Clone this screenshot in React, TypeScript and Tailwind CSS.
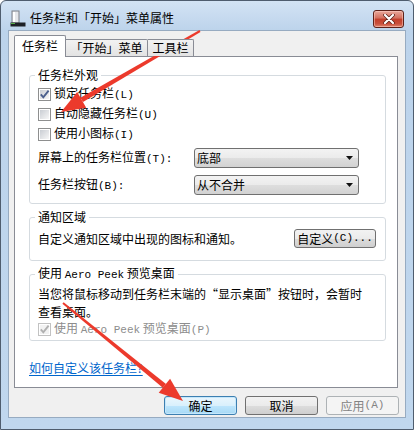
import React from "react";

const ui = "font-['Noto_Sans_CJK_SC','Noto_Sans_CJK_JP',sans-serif]";

function Lat({ children }: { children: React.ReactNode }) {
  return <span className="font-['Liberation_Mono',monospace] text-[11px]">{children}</span>;
}

function Check({ checked = false, disabled = false }: { checked?: boolean; disabled?: boolean }) {
  return (
    <span
      className={`relative w-[13px] h-[13px] shrink-0 border bg-white ${
        disabled ? "border-[#c2c2c2]" : "border-[#8e8f8f]"
      }`}
    >
      <span
        className={`absolute inset-px ${
          disabled ? "bg-[#f2f2f2]" : "bg-[linear-gradient(135deg,#c9cdd3,#f7f7f7)]"
        }`}
      />
      {checked && (
        <svg className="absolute inset-0" width="11" height="11" viewBox="0 0 11 11">
          <path
            d="M1.8 5.4 L4.3 8.3 L9.6 1.6"
            fill="none"
            stroke={disabled ? "#b0b0b0" : "#4b5f8d"}
            strokeWidth="1.9"
          />
        </svg>
      )}
    </span>
  );
}

function CheckRow({
  label,
  checked,
  disabled,
  h = "h-[20px]",
}: {
  label: React.ReactNode;
  checked?: boolean;
  disabled?: boolean;
  h?: string;
}) {
  return (
    <div className={`${h} flex items-center gap-[3px] ${disabled ? "text-[#8d8d8d]" : ""}`}>
      <Check checked={checked} disabled={disabled} />
      <span>{label}</span>
    </div>
  );
}

function Combo({ value }: { value: string }) {
  return (
    <div className="w-[165px] h-[20px] rounded-[3px] border border-[#707070] bg-[linear-gradient(#f3f3f3,#ebebeb_50%,#dedede_50%,#d2d2d2)] flex items-center pl-[2px] pr-[5px]">
      <span className="flex-1">{value}</span>
      <svg width="7" height="4" viewBox="0 0 7 4">
        <path d="M0 0 H7 L3.5 4 Z" fill="#111" />
      </svg>
    </div>
  );
}

function Group({
  title,
  className,
  children,
}: {
  title: React.ReactNode;
  className?: string;
  children: React.ReactNode;
}) {
  return (
    <fieldset className={`border border-[#d5dbe0] rounded-[3px] pl-[8px] ${className ?? ""}`}>
      <legend className="-ml-[3px] px-[3px] leading-[14px]">{title}</legend>
      {children}
    </fieldset>
  );
}

function Btn({
  children,
  primary,
  disabled,
}: {
  children: React.ReactNode;
  primary?: boolean;
  disabled?: boolean;
}) {
  let cls =
    "border-[#707070] bg-[linear-gradient(#f2f2f2,#ebebeb_50%,#dddddd_50%,#cfcfcf)] text-black";
  if (primary)
    cls =
      "border-[#3c7fb1] bg-[linear-gradient(#eaf6fd,#d9f0fc_50%,#bee6fd_50%,#a7d9f5)] text-black shadow-[inset_0_0_0_1px_#c5e7fb]";
  if (disabled) cls = "border-[#adb2b5] bg-[#f4f4f4] text-[#838383]";
  return (
    <button
      className={`w-[73px] h-[19px] rounded-[3px] border flex items-center justify-center leading-none ${cls}`}
    >
      {children}
    </button>
  );
}

export default function App() {
  return (
    <div
      lang="zh-CN"
      className={`relative w-[414px] h-[430px] overflow-hidden rounded-t-[6px] border border-[#4f5d6e] bg-[linear-gradient(#d3e3f4,#bcd3eb_30px,#c0d7ee)] text-[12px] text-black ${ui}`}
    >
      {/* title bar */}
      <div className="h-[29px] flex items-start pl-[9px] pr-[9px]">
        <svg className="mt-[9px]" width="16" height="17" viewBox="0 0 16 17">
          <rect x="2" y="1" width="7" height="12" fill="#e4e6ea" stroke="#7c8088" strokeWidth="1" />
          <rect x="3" y="2" width="2" height="10" fill="#ffffff" />
          <rect x="0.5" y="12.5" width="15" height="4" fill="#1d2026" />
          <rect x="1" y="13" width="4" height="1" fill="#5ab04a" />
        </svg>
        <span className="mt-[9px] ml-[4px] leading-[16px]">任务栏和「开始」菜单属性</span>
        <div className="flex-1" />
        <button className="mt-[9px] w-[31px] h-[18px] rounded-[3px] border border-[#5d2119] bg-[linear-gradient(#e9a99c,#d36e5d_45%,#c23e2a_50%,#c9503c_80%,#e0866f)] flex items-center justify-center shadow-[inset_0_0_0_1px_rgba(255,210,200,0.5)]">
          <svg width="12" height="10" viewBox="0 0 12 10">
            <path d="M2 1 L10 9 M10 1 L2 9" stroke="#5a2018" strokeWidth="3.6" strokeLinecap="round" />
            <path d="M2 1 L10 9 M10 1 L2 9" stroke="#ffffff" strokeWidth="2.2" strokeLinecap="round" />
          </svg>
        </button>
      </div>

      {/* client area */}
      <div className="ml-[7px] w-[398px] h-[388px] border border-[#97abc1] bg-[#f0f0f0] flex flex-col">
        <div className="pt-[4px] pl-[5px] pr-[7px]">
          <div className="relative z-10 h-[21px] flex items-end">
            <div className="h-[22px] -mb-px w-[52px] border border-b-0 border-[#898c95] bg-white rounded-t-[2px] flex items-center justify-center pb-[2px]">
              任务栏
            </div>
            <div className="h-[17px] w-[82px] border border-l-0 border-b-0 border-[#898c95] bg-[linear-gradient(#f2f2f2,#e3e3e3)] rounded-tr-[2px] flex items-center justify-center">
              「开始」菜单
            </div>
            <div className="h-[17px] w-[46px] border border-l-0 border-b-0 border-[#898c95] bg-[linear-gradient(#f2f2f2,#e3e3e3)] rounded-tr-[2px] flex items-center justify-center">
              工具栏
            </div>
          </div>

          <div className="h-[332px] border border-[#898c95] bg-white pl-[14px] pr-[11px] pt-[11px]">
            <Group title="任务栏外观" className="pt-[2px] pb-[8px]">
              <CheckRow checked label={<>锁定任务栏<Lat>(L)</Lat></>} />
              <CheckRow label={<>自动隐藏任务栏<Lat>(U)</Lat></>} />
              <CheckRow label={<>使用小图标<Lat>(I)</Lat></>} />
              <div className="mt-[4px] flex items-center">
                <span className="w-[156px]">
                  屏幕上的任务栏位置<Lat>(T):</Lat>
                </span>
                <Combo value="底部" />
              </div>
              <div className="mt-[7px] flex items-center">
                <span className="w-[156px]">
                  任务栏按钮<Lat>(B):</Lat>
                </span>
                <Combo value="从不合并" />
              </div>
            </Group>

            <Group title="通知区域" className="mt-[6px] pt-[5px] pb-[12px] pr-[9px]">
              <div className="h-[19px] flex items-center justify-between">
                <span>自定义通知区域中出现的图标和通知。</span>
                <button className="w-[82px] h-[19px] rounded-[3px] border border-[#707070] bg-[linear-gradient(#f2f2f2,#ebebeb_50%,#dddddd_50%,#cfcfcf)] flex items-center justify-center leading-none">
                  自定义<Lat>(C)...</Lat>
                </button>
              </div>
            </Group>

            <Group
              title={<>使用 <Lat>Aero Peek</Lat> 预览桌面</>}
              className="mt-[5px] pt-[3px] pb-[2px]"
            >
              <p className="leading-[17.5px]">
                当您将鼠标移动到任务栏末端的“显示桌面”按钮时，会暂时
                <br />
                查看桌面。
              </p>
              <CheckRow
                h="h-[18px]"
                checked
                disabled
                label={<>使用 <Lat>Aero Peek</Lat> 预览桌面<Lat>(P)</Lat></>}
              />
            </Group>

            <a className="block mt-[20px] leading-[14px] text-[#0066cc] underline underline-offset-2 w-fit">
              如何自定义该任务栏?
            </a>
          </div>
        </div>

        <div className="mt-[8px] pr-[6px] flex justify-end gap-[8px]">
          <Btn primary>确定</Btn>
          <Btn>取消</Btn>
          <Btn disabled>
            应用<Lat>(A)</Lat>
          </Btn>
        </div>
      </div>

      {/* red annotation arrows */}
      <svg
        className="absolute left-0 top-0 pointer-events-none"
        width="414"
        height="430"
        viewBox="0 0 414 430"
      >
        <polygon points="199.5,30.9 198.5,29.1 79.4,96.7 82.0,101.1" fill="#ec3a2c" />
        <polygon points="60,111 85.2,106.7 76.2,91.1" fill="#ec3a2c" />
        <polygon points="61.4,302.8 62.6,301.2 165.0,382.9 161.8,386.7" fill="#ec3a2c" />
        <polygon points="182,400 157.7,391.8 169.1,377.8" fill="#ec3a2c" />
      </svg>
    </div>
  );
}
